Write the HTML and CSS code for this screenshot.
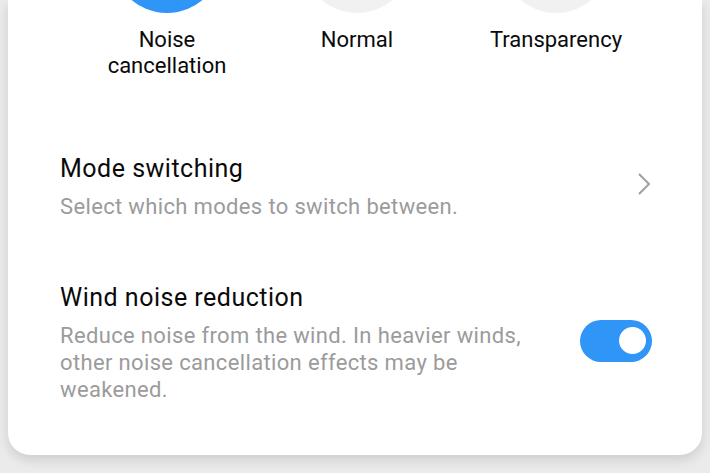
FILE: index.html
```html
<!DOCTYPE html>
<html lang="en">
<head>
    <meta charset="UTF-8">
    <meta name="viewport" content="width=device-width, initial-scale=1.0">
    <title>Earbuds settings</title>
    <link rel="stylesheet" href="styles.css">
</head>
<body>
    <div class="card">
        <div class="modes">
            <div class="mode">
                <div class="mode-circle active"></div>
                <p>Noise<br>cancellation</p>
            </div>
            <div class="mode">
                <div class="mode-circle"></div>
                <p>Normal</p>
            </div>
            <div class="mode wide">
                <div class="mode-circle"></div>
                <p>Transparency</p>
            </div>
        </div>

        <div class="setting first">
            <div class="setting-text">
                <h3>Mode switching</h3>
                <p>Select which modes to switch between.</p>
            </div>
            <svg class="chevron" width="16" height="24" viewBox="0 0 16 24">
                <path d="M3 2 L13 12 L3 22" fill="none" stroke="#a0a0a0" stroke-width="2"/>
            </svg>
        </div>

        <div class="setting">
            <div class="setting-text narrow">
                <h3>Wind noise reduction</h3>
                <p>Reduce noise from the wind. In heavier winds, other noise cancellation effects may be weakened.</p>
            </div>
            <div class="switch on">
                <span class="knob"></span>
            </div>
        </div>
    </div>
</body>
</html>
```

FILE: styles.css
```css
* {
    margin: 0;
    padding: 0;
    box-sizing: border-box;
}

body {
    font-family: Roboto, 'Noto Sans', sans-serif;
    background-color: #ebebeb;
    color: #111;
    height: 473px;
    overflow: hidden;
}

.card {
    margin: 0 8px;
    background-color: white;
    border-radius: 0 0 22px 22px;
    box-shadow: 0 5px 12px rgba(0, 0, 0, 0.13);
    padding: 0 50px 52px 52px;
}

/* mode picker */
.modes {
    display: grid;
    grid-template-columns: 190px 190px 208px;
    margin: 0 0 0 12px;
}

.mode {
    display: flex;
    flex-direction: column;
    align-items: center;
}

.mode-circle {
    width: 110px;
    height: 110px;
    border-radius: 50%;
    background-color: #f1f1f1;
    margin-top: -97px;
}

.mode-circle.active {
    background-color: #2f95f6;
}

.mode p {
    margin-top: 14px;
    font-size: 22px;
    line-height: 26px;
    text-align: center;
    color: #0a0a0a;
}

/* setting rows */
.setting {
    display: flex;
    align-items: center;
    justify-content: space-between;
    margin-top: 62px;
}

.setting.first {
    margin-top: 74px;
}

.setting-text h3 {
    font-size: 25px;
    font-weight: 400;
    line-height: 32px;
    letter-spacing: 0.5px;
    color: #0a0a0a;
}

.setting-text p {
    margin-top: 8px;
    font-size: 22px;
    line-height: 27px;
    color: #9b9b9b;
    letter-spacing: 0.35px;
}

.setting-text.narrow {
    width: 480px;
}

.chevron {
    margin-top: -6px;
}

.switch {
    width: 72px;
    height: 42px;
    margin-bottom: 4px;
    border-radius: 21px;
    background-color: #2f95f6;
    display: flex;
    align-items: center;
    justify-content: flex-end;
    padding-right: 6px;
}

.knob {
    width: 27px;
    height: 27px;
    border-radius: 50%;
    background-color: white;
}
```
